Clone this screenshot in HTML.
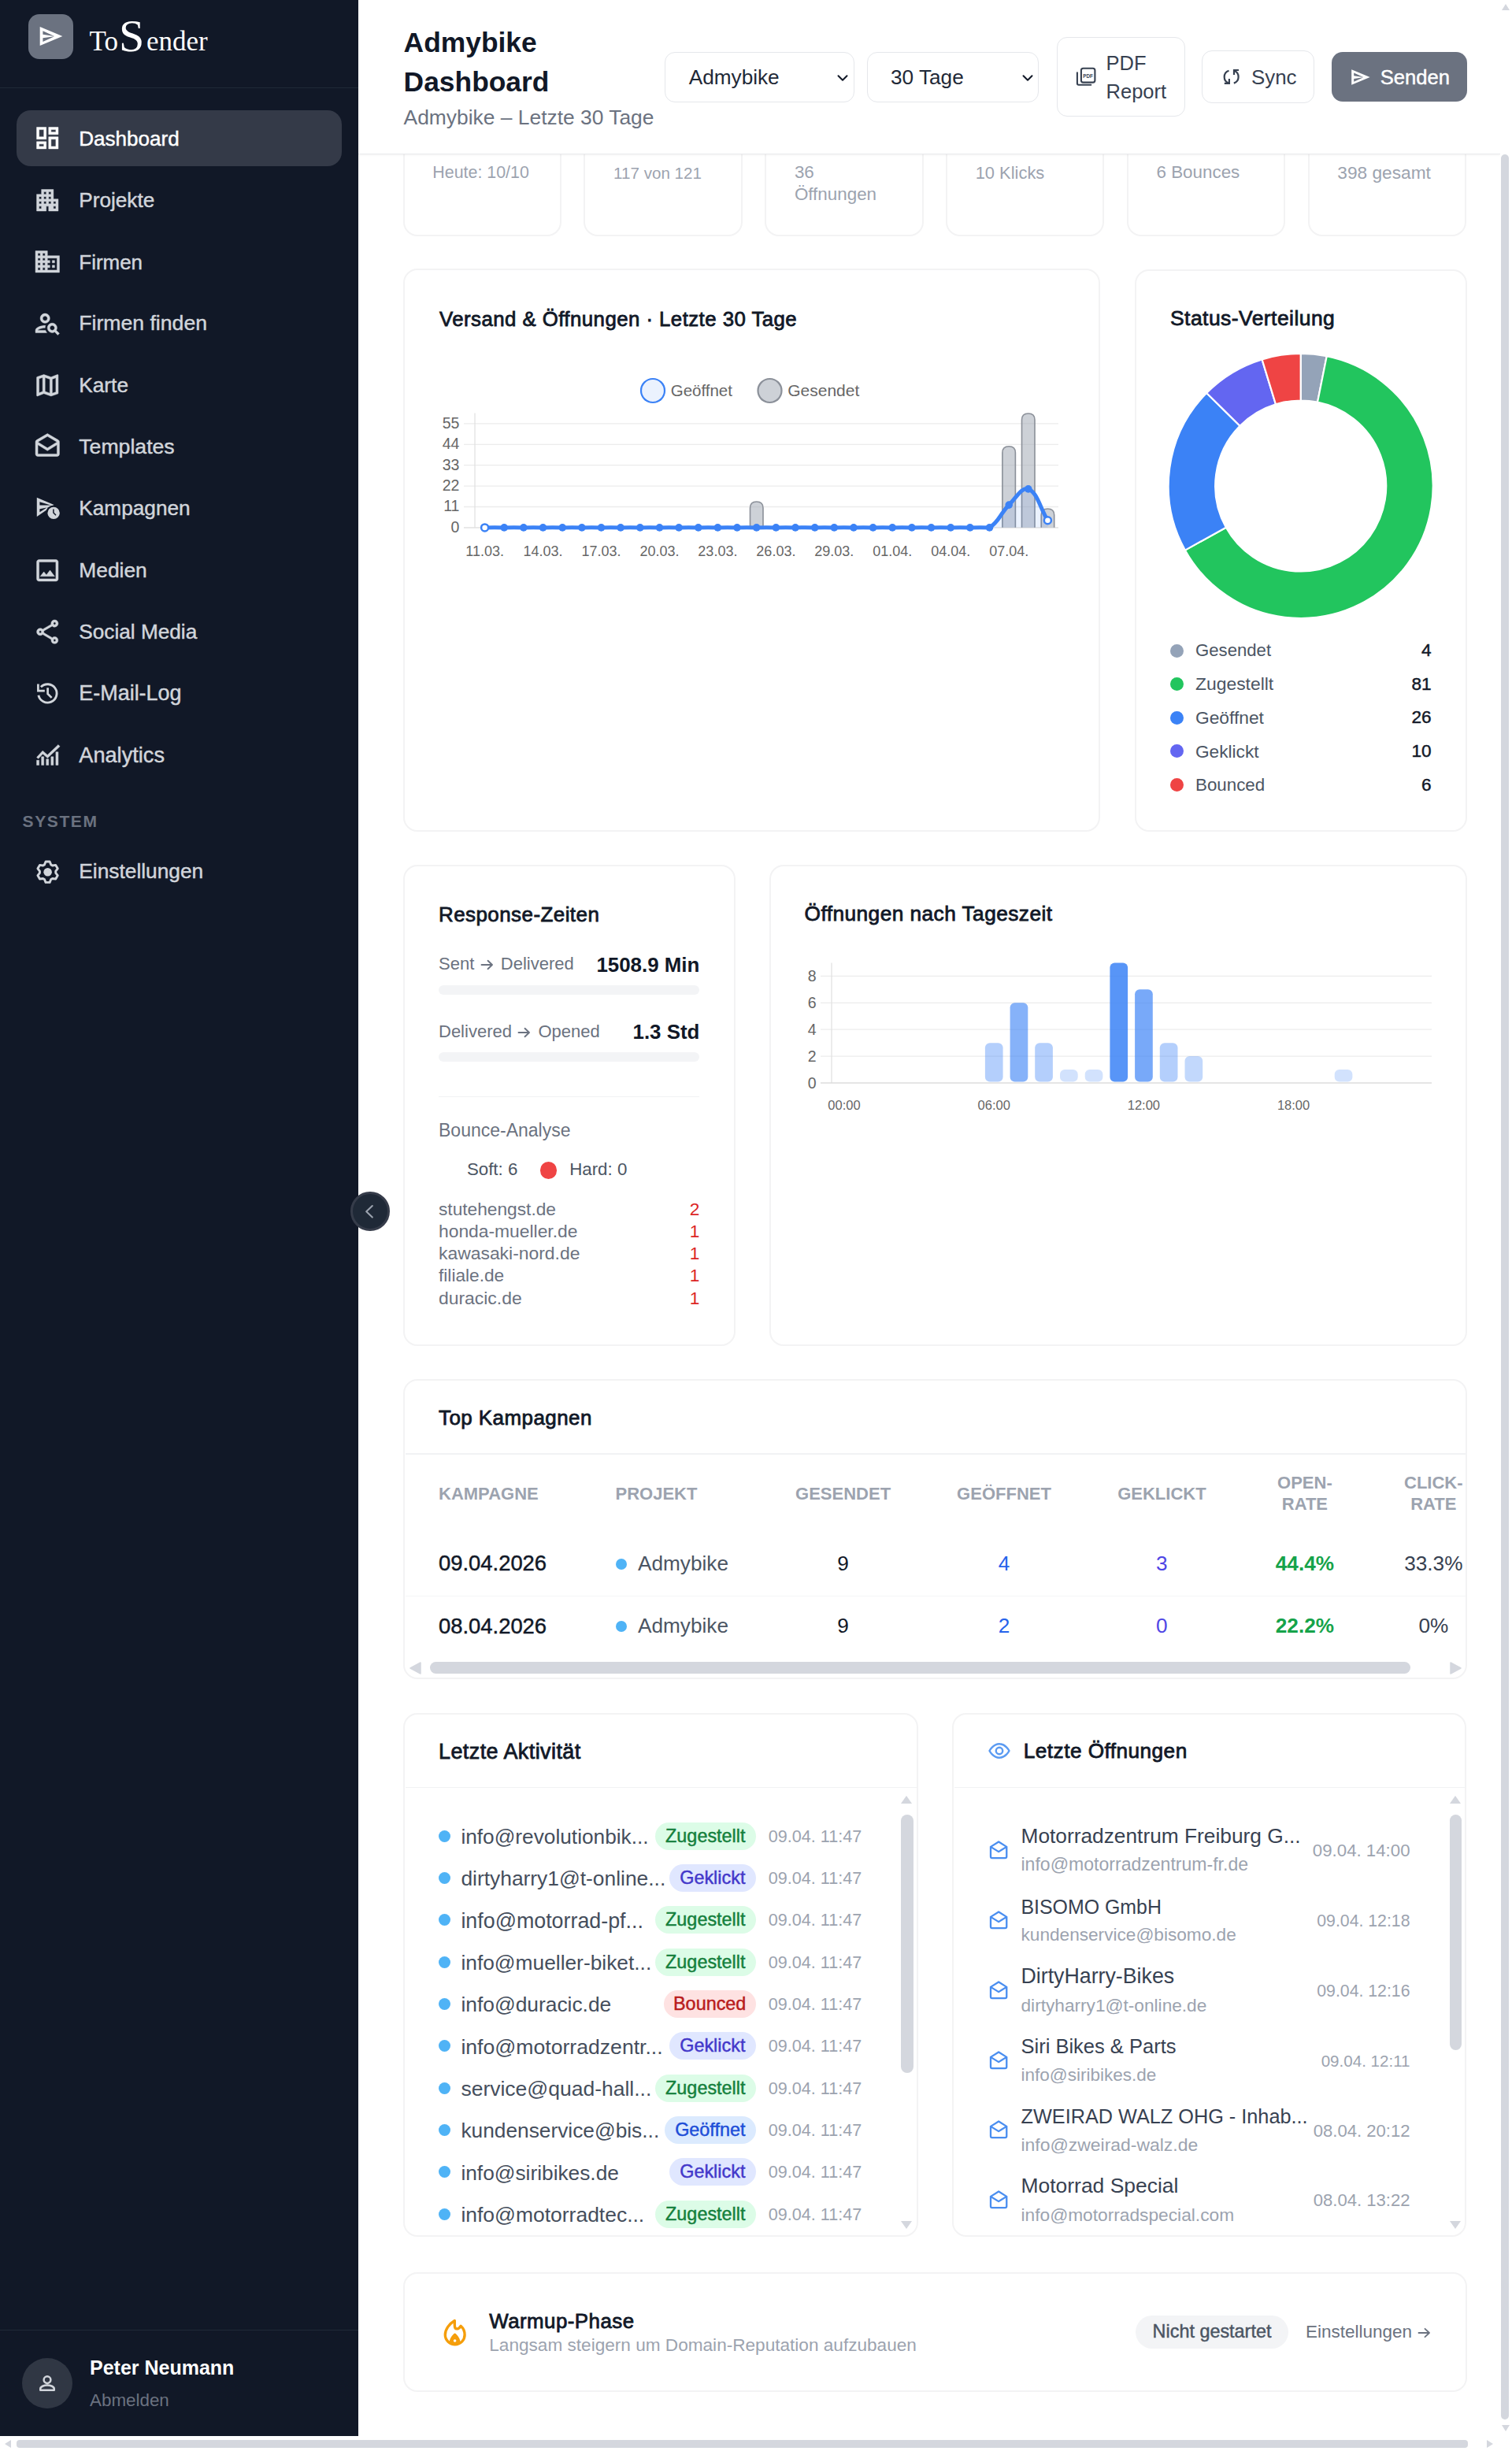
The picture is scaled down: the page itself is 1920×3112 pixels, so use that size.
<!DOCTYPE html><html><head><meta charset="utf-8"><title>Admybike Dashboard</title>
<style>
html,body{margin:0;padding:0;}
body{width:1920px;height:3112px;overflow:hidden;position:relative;background:#fff;font-family:"Liberation Sans",sans-serif;}
.t{position:absolute;white-space:nowrap;}
.b{position:absolute;}
svg.b{overflow:visible;}
</style></head><body>

<div class="b" style="left:511.5px;top:59.0px;width:201.6px;height:240.5px;background:#fff;border:2.2px solid #f3f3f4;border-radius:18px;box-sizing:border-box;"></div>
<div class="t " style="left:549.3px;top:206.1px;font-size:21.4px;line-height:27px;color:#9ca3af;font-weight:400;">Heute: 10/10</div>
<div class="b" style="left:741.3px;top:59.0px;width:201.6px;height:240.5px;background:#fff;border:2.2px solid #f3f3f4;border-radius:18px;box-sizing:border-box;"></div>
<div class="t " style="left:779.1px;top:206.9px;font-size:20.6px;line-height:26px;color:#9ca3af;font-weight:400;">117 von 121</div>
<div class="b" style="left:971.1px;top:59.0px;width:201.6px;height:240.5px;background:#fff;border:2.2px solid #f3f3f4;border-radius:18px;box-sizing:border-box;"></div>
<div class="t " style="left:1008.9px;top:205.2px;font-size:22.4px;line-height:28px;color:#9ca3af;font-weight:400;">36</div>
<div class="t " style="left:1008.9px;top:233.0px;font-size:22.4px;line-height:28px;color:#9ca3af;font-weight:400;">Öffnungen</div>
<div class="b" style="left:1200.9px;top:59.0px;width:201.6px;height:240.5px;background:#fff;border:2.2px solid #f3f3f4;border-radius:18px;box-sizing:border-box;"></div>
<div class="t " style="left:1238.7px;top:205.9px;font-size:21.9px;line-height:27px;color:#9ca3af;font-weight:400;">10 Klicks</div>
<div class="b" style="left:1430.7px;top:59.0px;width:201.6px;height:240.5px;background:#fff;border:2.2px solid #f3f3f4;border-radius:18px;box-sizing:border-box;"></div>
<div class="t " style="left:1468.5px;top:205.2px;font-size:22.4px;line-height:28px;color:#9ca3af;font-weight:400;">6 Bounces</div>
<div class="b" style="left:1660.5px;top:59.0px;width:201.6px;height:240.5px;background:#fff;border:2.2px solid #f3f3f4;border-radius:18px;box-sizing:border-box;"></div>
<div class="t " style="left:1698.3px;top:205.1px;font-size:22.7px;line-height:28px;color:#9ca3af;font-weight:400;">398 gesamt</div>
<div class="b" style="left:512.2px;top:341.0px;width:884.6px;height:715.0px;background:#fff;border:2.2px solid #f3f3f4;border-radius:18px;box-sizing:border-box;"></div>
<div class="t " style="left:558.0px;top:389.1px;font-size:25.807591767607967px;line-height:32px;color:#111827;font-weight:400;-webkit-text-stroke:0.8px currentColor;letter-spacing:0.45px;">Versand &amp; Öffnungen · Letzte 30 Tage</div>
<svg class="b" style="left:0;top:0" width="1920" height="1100" viewBox="0 0 1920 1100"><line x1="589" y1="643.5" x2="1344" y2="643.5" stroke="#ececec" stroke-width="1.3"/><line x1="589" y1="617.1" x2="1344" y2="617.1" stroke="#ececec" stroke-width="1.3"/><line x1="589" y1="590.7" x2="1344" y2="590.7" stroke="#ececec" stroke-width="1.3"/><line x1="589" y1="564.3" x2="1344" y2="564.3" stroke="#ececec" stroke-width="1.3"/><line x1="589" y1="537.9" x2="1344" y2="537.9" stroke="#ececec" stroke-width="1.3"/><line x1="603" y1="524.5" x2="603" y2="670" stroke="#e2e2e2" stroke-width="1.3"/><line x1="589" y1="670" x2="1344" y2="670" stroke="#e2e2e2" stroke-width="1.3"/><path d="M952.5 669.7 V645.0 Q952.5 637.0 960.7 637.0 Q969.0 637.0 969.0 645.0 V669.7" fill="rgba(156,163,175,0.5)" stroke="#8b9099" stroke-width="1.6"/><path d="M1272.9 669.7 V574.8 Q1272.9 566.8 1281.2 566.8 Q1289.4 566.8 1289.4 574.8 V669.7" fill="rgba(156,163,175,0.5)" stroke="#8b9099" stroke-width="1.6"/><path d="M1297.5 669.7 V533.0 Q1297.5 525.0 1305.8 525.0 Q1314.0 525.0 1314.0 533.0 V669.7" fill="rgba(156,163,175,0.5)" stroke="#8b9099" stroke-width="1.6"/><path d="M1322.2 669.7 V654.0 Q1322.2 646.0 1330.4 646.0 Q1338.7 646.0 1338.7 654.0 V669.7" fill="rgba(156,163,175,0.5)" stroke="#8b9099" stroke-width="1.6"/><path d="M615.6 669.9 C625.5 669.7 630.4 669.7 640.2 669.9 C650.1 669.7 655.0 669.7 664.9 669.9 C674.8 669.7 679.7 669.7 689.5 669.9 C699.4 669.7 704.3 669.7 714.2 669.9 C724.1 669.7 729.0 669.7 738.9 669.9 C748.7 669.7 753.6 669.7 763.5 669.9 C773.4 669.7 778.3 669.7 788.1 669.9 C798.0 669.7 802.9 669.7 812.8 669.9 C822.7 669.7 827.6 669.7 837.5 669.9 C847.3 669.7 852.2 669.7 862.1 669.9 C872.0 669.7 876.9 669.7 886.8 669.9 C896.6 669.7 901.5 669.7 911.4 669.9 C921.3 669.7 926.2 669.7 936.0 669.9 C945.9 669.7 950.8 669.7 960.7 669.9 C970.6 669.7 975.5 669.7 985.4 669.9 C995.2 669.7 1000.1 669.7 1010.0 669.9 C1019.9 669.7 1024.8 669.7 1034.7 669.9 C1044.5 669.7 1049.4 669.7 1059.3 669.9 C1069.2 669.7 1074.1 669.7 1084.0 669.9 C1093.8 669.7 1098.7 669.7 1108.6 669.9 C1118.5 669.7 1123.4 669.7 1133.2 669.9 C1143.1 669.7 1148.0 669.7 1157.9 669.9 C1167.8 669.7 1172.7 669.7 1182.5 669.9 C1192.4 669.7 1197.3 669.7 1207.2 669.9 C1217.1 669.7 1222.0 669.7 1231.8 669.9 C1241.7 669.7 1248.7 669.7 1256.5 669.9 C1268.4 662.9 1270.4 651.7 1281.2 641.1 C1290.2 632.2 1297.8 617.8 1305.8 620.9 C1317.5 625.6 1320.6 644.8 1330.4 660.8 L1330.4 669.7 L615.6 669.7 Z" fill="rgba(59,130,246,0.1)"/><path d="M615.6 669.9 C625.5 669.7 630.4 669.7 640.2 669.9 C650.1 669.7 655.0 669.7 664.9 669.9 C674.8 669.7 679.7 669.7 689.5 669.9 C699.4 669.7 704.3 669.7 714.2 669.9 C724.1 669.7 729.0 669.7 738.9 669.9 C748.7 669.7 753.6 669.7 763.5 669.9 C773.4 669.7 778.3 669.7 788.1 669.9 C798.0 669.7 802.9 669.7 812.8 669.9 C822.7 669.7 827.6 669.7 837.5 669.9 C847.3 669.7 852.2 669.7 862.1 669.9 C872.0 669.7 876.9 669.7 886.8 669.9 C896.6 669.7 901.5 669.7 911.4 669.9 C921.3 669.7 926.2 669.7 936.0 669.9 C945.9 669.7 950.8 669.7 960.7 669.9 C970.6 669.7 975.5 669.7 985.4 669.9 C995.2 669.7 1000.1 669.7 1010.0 669.9 C1019.9 669.7 1024.8 669.7 1034.7 669.9 C1044.5 669.7 1049.4 669.7 1059.3 669.9 C1069.2 669.7 1074.1 669.7 1084.0 669.9 C1093.8 669.7 1098.7 669.7 1108.6 669.9 C1118.5 669.7 1123.4 669.7 1133.2 669.9 C1143.1 669.7 1148.0 669.7 1157.9 669.9 C1167.8 669.7 1172.7 669.7 1182.5 669.9 C1192.4 669.7 1197.3 669.7 1207.2 669.9 C1217.1 669.7 1222.0 669.7 1231.8 669.9 C1241.7 669.7 1248.7 669.7 1256.5 669.9 C1268.4 662.9 1270.4 651.7 1281.2 641.1 C1290.2 632.2 1297.8 617.8 1305.8 620.9 C1317.5 625.6 1320.6 644.8 1330.4 660.8" fill="none" stroke="#3b82f6" stroke-width="5" stroke-linejoin="round"/><circle cx="615.6" cy="669.9" r="4.5" fill="#fff" stroke="#3b82f6" stroke-width="2.5"/><circle cx="640.2" cy="669.9" r="4.8" fill="#3b82f6"/><circle cx="664.9" cy="669.9" r="4.8" fill="#3b82f6"/><circle cx="689.5" cy="669.9" r="4.8" fill="#3b82f6"/><circle cx="714.2" cy="669.9" r="4.8" fill="#3b82f6"/><circle cx="738.9" cy="669.9" r="4.8" fill="#3b82f6"/><circle cx="763.5" cy="669.9" r="4.8" fill="#3b82f6"/><circle cx="788.1" cy="669.9" r="4.8" fill="#3b82f6"/><circle cx="812.8" cy="669.9" r="4.8" fill="#3b82f6"/><circle cx="837.5" cy="669.9" r="4.8" fill="#3b82f6"/><circle cx="862.1" cy="669.9" r="4.8" fill="#3b82f6"/><circle cx="886.8" cy="669.9" r="4.8" fill="#3b82f6"/><circle cx="911.4" cy="669.9" r="4.8" fill="#3b82f6"/><circle cx="936.0" cy="669.9" r="4.8" fill="#3b82f6"/><circle cx="960.7" cy="669.9" r="4.8" fill="#3b82f6"/><circle cx="985.4" cy="669.9" r="4.8" fill="#3b82f6"/><circle cx="1010.0" cy="669.9" r="4.8" fill="#3b82f6"/><circle cx="1034.7" cy="669.9" r="4.8" fill="#3b82f6"/><circle cx="1059.3" cy="669.9" r="4.8" fill="#3b82f6"/><circle cx="1084.0" cy="669.9" r="4.8" fill="#3b82f6"/><circle cx="1108.6" cy="669.9" r="4.8" fill="#3b82f6"/><circle cx="1133.2" cy="669.9" r="4.8" fill="#3b82f6"/><circle cx="1157.9" cy="669.9" r="4.8" fill="#3b82f6"/><circle cx="1182.5" cy="669.9" r="4.8" fill="#3b82f6"/><circle cx="1207.2" cy="669.9" r="4.8" fill="#3b82f6"/><circle cx="1231.8" cy="669.9" r="4.8" fill="#3b82f6"/><circle cx="1256.5" cy="669.9" r="4.8" fill="#3b82f6"/><circle cx="1281.2" cy="641.1" r="4.8" fill="#3b82f6"/><circle cx="1305.8" cy="620.9" r="4.8" fill="#3b82f6"/><circle cx="1330.4" cy="660.8" r="4.5" fill="#fff" stroke="#3b82f6" stroke-width="2.5"/><circle cx="829" cy="496" r="15" fill="rgba(59,130,246,0.1)" stroke="#3b82f6" stroke-width="2.2"/><circle cx="977.5" cy="496" r="15" fill="rgba(156,163,175,0.5)" stroke="#8b9099" stroke-width="2.2"/></svg>
<div class="t " style="left:851.7px;top:483.4px;font-size:20.5px;line-height:26px;color:#666666;font-weight:400;">Geöffnet</div>
<div class="t " style="left:1000.2px;top:483.2px;font-size:21px;line-height:26px;color:#666666;font-weight:400;">Gesendet</div>
<div class="t " style="left:523.4px;width:60px;text-align:right;top:656.7px;font-size:19.5px;line-height:24px;color:#666666;font-weight:400;">0</div>
<div class="t " style="left:523.4px;width:60px;text-align:right;top:630.3px;font-size:19.5px;line-height:24px;color:#666666;font-weight:400;">11</div>
<div class="t " style="left:523.4px;width:60px;text-align:right;top:603.9px;font-size:19.5px;line-height:24px;color:#666666;font-weight:400;">22</div>
<div class="t " style="left:523.4px;width:60px;text-align:right;top:577.5px;font-size:19.5px;line-height:24px;color:#666666;font-weight:400;">33</div>
<div class="t " style="left:523.4px;width:60px;text-align:right;top:551.1px;font-size:19.5px;line-height:24px;color:#666666;font-weight:400;">44</div>
<div class="t " style="left:523.4px;width:60px;text-align:right;top:524.7px;font-size:19.5px;line-height:24px;color:#666666;font-weight:400;">55</div>
<div class="t " style="left:565.6px;width:100px;text-align:center;top:688.6px;font-size:18px;line-height:22px;color:#666666;font-weight:400;">11.03.</div>
<div class="t " style="left:639.5px;width:100px;text-align:center;top:688.6px;font-size:18px;line-height:22px;color:#666666;font-weight:400;">14.03.</div>
<div class="t " style="left:713.5px;width:100px;text-align:center;top:688.6px;font-size:18px;line-height:22px;color:#666666;font-weight:400;">17.03.</div>
<div class="t " style="left:787.5px;width:100px;text-align:center;top:688.6px;font-size:18px;line-height:22px;color:#666666;font-weight:400;">20.03.</div>
<div class="t " style="left:861.4px;width:100px;text-align:center;top:688.6px;font-size:18px;line-height:22px;color:#666666;font-weight:400;">23.03.</div>
<div class="t " style="left:935.4px;width:100px;text-align:center;top:688.6px;font-size:18px;line-height:22px;color:#666666;font-weight:400;">26.03.</div>
<div class="t " style="left:1009.3px;width:100px;text-align:center;top:688.6px;font-size:18px;line-height:22px;color:#666666;font-weight:400;">29.03.</div>
<div class="t " style="left:1083.2px;width:100px;text-align:center;top:688.6px;font-size:18px;line-height:22px;color:#666666;font-weight:400;">01.04.</div>
<div class="t " style="left:1157.2px;width:100px;text-align:center;top:688.6px;font-size:18px;line-height:22px;color:#666666;font-weight:400;">04.04.</div>
<div class="t " style="left:1231.2px;width:100px;text-align:center;top:688.6px;font-size:18px;line-height:22px;color:#666666;font-weight:400;">07.04.</div>
<div class="b" style="left:1441.2px;top:342.0px;width:421.6px;height:714.0px;background:#fff;border:2.2px solid #f3f3f4;border-radius:18px;box-sizing:border-box;"></div>
<div class="t " style="left:1486.0px;top:388.0px;font-size:26.4779138712788px;line-height:33px;color:#111827;font-weight:400;-webkit-text-stroke:0.8px currentColor;letter-spacing:0.45px;">Status-Verteilung</div>
<svg class="b" style="left:0;top:0" width="1920" height="1100" viewBox="0 0 1920 1100"><path d="M1651.70 449.00 A168 168 0 0 1 1684.73 452.28 L1673.03 510.62 A108.5 108.5 0 0 0 1651.70 508.50 Z" fill="#94a3b8" stroke="#fff" stroke-width="2.2" stroke-linejoin="round"/><path d="M1684.73 452.28 A168 168 0 1 1 1504.84 698.59 L1556.85 669.69 A108.5 108.5 0 1 0 1673.03 510.62 Z" fill="#22c55e" stroke="#fff" stroke-width="2.2" stroke-linejoin="round"/><path d="M1504.84 698.59 A168 168 0 0 1 1532.17 498.94 L1574.51 540.75 A108.5 108.5 0 0 0 1556.85 669.69 Z" fill="#3b82f6" stroke="#fff" stroke-width="2.2" stroke-linejoin="round"/><path d="M1532.17 498.94 A168 168 0 0 1 1602.56 456.35 L1619.96 513.25 A108.5 108.5 0 0 0 1574.51 540.75 Z" fill="#6366f1" stroke="#fff" stroke-width="2.2" stroke-linejoin="round"/><path d="M1602.56 456.35 A168 168 0 0 1 1651.70 449.00 L1651.70 508.50 A108.5 108.5 0 0 0 1619.96 513.25 Z" fill="#ef4444" stroke="#fff" stroke-width="2.2" stroke-linejoin="round"/></svg>
<div class="b" style="left:1485.5px;top:817.5px;width:17.0px;height:17.0px;background:#94a3b8;border-radius:50%;"></div>
<div class="t " style="left:1518.0px;top:812.3px;font-size:22.160409310369676px;line-height:28px;color:#4b5563;font-weight:400;">Gesendet</div>
<div class="t " style="left:1717.6px;width:100px;text-align:right;top:812.2px;font-size:22.6px;line-height:28px;color:#111827;font-weight:400;-webkit-text-stroke:0.45px currentColor;">4</div>
<div class="b" style="left:1485.5px;top:860.1px;width:17.0px;height:17.0px;background:#22c55e;border-radius:50%;"></div>
<div class="t " style="left:1518.0px;top:854.2px;font-size:22.881032183659496px;line-height:29px;color:#4b5563;font-weight:400;">Zugestellt</div>
<div class="t " style="left:1717.6px;width:100px;text-align:right;top:854.8px;font-size:22.6px;line-height:28px;color:#111827;font-weight:400;-webkit-text-stroke:0.45px currentColor;">81</div>
<div class="b" style="left:1485.5px;top:902.7px;width:17.0px;height:17.0px;background:#3b82f6;border-radius:50%;"></div>
<div class="t " style="left:1518.0px;top:897.3px;font-size:22.786985880908535px;line-height:28px;color:#4b5563;font-weight:400;">Geöffnet</div>
<div class="t " style="left:1717.6px;width:100px;text-align:right;top:897.4px;font-size:22.6px;line-height:28px;color:#111827;font-weight:400;-webkit-text-stroke:0.45px currentColor;">26</div>
<div class="b" style="left:1485.5px;top:945.3px;width:17.0px;height:17.0px;background:#6366f1;border-radius:50%;"></div>
<div class="t " style="left:1518.0px;top:939.9px;font-size:22.66432337434095px;line-height:28px;color:#4b5563;font-weight:400;">Geklickt</div>
<div class="t " style="left:1717.6px;width:100px;text-align:right;top:940.0px;font-size:22.6px;line-height:28px;color:#111827;font-weight:400;-webkit-text-stroke:0.45px currentColor;">10</div>
<div class="b" style="left:1485.5px;top:987.9px;width:17.0px;height:17.0px;background:#ef4444;border-radius:50%;"></div>
<div class="t " style="left:1518.0px;top:982.7px;font-size:22.34148658275944px;line-height:28px;color:#4b5563;font-weight:400;">Bounced</div>
<div class="t " style="left:1717.6px;width:100px;text-align:right;top:982.6px;font-size:22.6px;line-height:28px;color:#111827;font-weight:400;-webkit-text-stroke:0.45px currentColor;">6</div>
<div class="b" style="left:511.7px;top:1098.0px;width:422.1px;height:610.5px;background:#fff;border:2.2px solid #f3f3f4;border-radius:18px;box-sizing:border-box;"></div>
<div class="t " style="left:557.0px;top:1144.8px;font-size:25.941154745783578px;line-height:32px;color:#111827;font-weight:400;-webkit-text-stroke:0.8px currentColor;letter-spacing:0.45px;">Response-Zeiten</div>
<div class="t " style="left:557.0px;top:1210.4px;font-size:22px;line-height:28px;color:#6b7280;font-weight:400;">Sent<svg width="17" height="14" viewBox="0 0 17 14" style="vertical-align:-1px;margin:0 9px 0 7.5px"><path d="M1.5 7H15 M9.5 1.8L15 7 9.5 12.2" fill="none" stroke="#6b7280" stroke-width="1.9" stroke-linecap="round" stroke-linejoin="round"/></svg>Delivered</div>
<div class="t " style="left:588.4px;width:300px;text-align:right;top:1208.5px;font-size:25.9px;line-height:32px;color:#111827;font-weight:700;">1508.9 Min</div>
<div class="b" style="left:557.0px;top:1250.7px;width:331.4px;height:12.5px;background:#f3f4f6;border-radius:7px;"></div>
<div class="t " style="left:557.0px;top:1296.1px;font-size:22px;line-height:28px;color:#6b7280;font-weight:400;">Delivered<svg width="17" height="14" viewBox="0 0 17 14" style="vertical-align:-1px;margin:0 9px 0 7.5px"><path d="M1.5 7H15 M9.5 1.8L15 7 9.5 12.2" fill="none" stroke="#6b7280" stroke-width="1.9" stroke-linecap="round" stroke-linejoin="round"/></svg>Opened</div>
<div class="t " style="left:588.4px;width:300px;text-align:right;top:1294.0px;font-size:25.9px;line-height:32px;color:#111827;font-weight:700;">1.3 Std</div>
<div class="b" style="left:557.0px;top:1335.5px;width:331.4px;height:12.8px;background:#f3f4f6;border-radius:7px;"></div>
<div class="b" style="left:557.0px;top:1391.5px;width:331.4px;height:1.5px;background:#f1f2f4;"></div>
<div class="t " style="left:557.0px;top:1420.8px;font-size:23px;line-height:29px;color:#6b7280;font-weight:400;">Bounce-Analyse</div>
<div class="t " style="left:592.9px;top:1471.3px;font-size:22.3px;line-height:28px;color:#4b5563;font-weight:400;">Soft: 6</div>
<div class="b" style="left:686.0px;top:1475.3px;width:21.4px;height:21.4px;background:#ef4444;border-radius:50%;"></div>
<div class="t " style="left:723.2px;top:1471.3px;font-size:22.3px;line-height:28px;color:#4b5563;font-weight:400;">Hard: 0</div>
<div class="t " style="left:557.0px;top:1520.5px;font-size:22.711250833571498px;line-height:28px;color:#6b7280;font-weight:400;">stutehengst.de</div>
<div class="t " style="left:828.4px;width:60px;text-align:right;top:1520.5px;font-size:22.7px;line-height:28px;color:#dc2626;font-weight:400;">2</div>
<div class="t " style="left:557.0px;top:1548.8px;font-size:22.840042865519543px;line-height:28px;color:#6b7280;font-weight:400;">honda-mueller.de</div>
<div class="t " style="left:828.4px;width:60px;text-align:right;top:1548.8px;font-size:22.7px;line-height:28px;color:#dc2626;font-weight:400;">1</div>
<div class="t " style="left:557.0px;top:1577.1px;font-size:22.902711323763956px;line-height:28px;color:#6b7280;font-weight:400;">kawasaki-nord.de</div>
<div class="t " style="left:828.4px;width:60px;text-align:right;top:1577.1px;font-size:22.7px;line-height:28px;color:#dc2626;font-weight:400;">1</div>
<div class="t " style="left:557.0px;top:1605.4px;font-size:22.703347244698065px;line-height:28px;color:#6b7280;font-weight:400;">filiale.de</div>
<div class="t " style="left:828.4px;width:60px;text-align:right;top:1605.4px;font-size:22.7px;line-height:28px;color:#dc2626;font-weight:400;">1</div>
<div class="t " style="left:557.0px;top:1633.7px;font-size:22.909004707236953px;line-height:28px;color:#6b7280;font-weight:400;">duracic.de</div>
<div class="t " style="left:828.4px;width:60px;text-align:right;top:1633.7px;font-size:22.7px;line-height:28px;color:#dc2626;font-weight:400;">1</div>
<div class="b" style="left:977.2px;top:1098.0px;width:885.6px;height:610.6px;background:#fff;border:2.2px solid #f3f3f4;border-radius:18px;box-sizing:border-box;"></div>
<div class="t " style="left:1021.5px;top:1144.4px;font-size:26.288242594291265px;line-height:33px;color:#111827;font-weight:400;-webkit-text-stroke:0.8px currentColor;letter-spacing:0.45px;">Öffnungen nach Tageszeit</div>
<svg class="b" style="left:0;top:0" width="1920" height="1500" viewBox="0 0 1920 1500"><line x1="1042" y1="1341.1" x2="1818" y2="1341.1" stroke="#ececec" stroke-width="1.3"/><line x1="1042" y1="1307.2" x2="1818" y2="1307.2" stroke="#ececec" stroke-width="1.3"/><line x1="1042" y1="1273.3" x2="1818" y2="1273.3" stroke="#ececec" stroke-width="1.3"/><line x1="1042" y1="1239.4" x2="1818" y2="1239.4" stroke="#ececec" stroke-width="1.3"/><line x1="1056" y1="1222.5" x2="1056" y2="1375" stroke="#e2e2e2" stroke-width="1.3"/><line x1="1042" y1="1375" x2="1818" y2="1375" stroke="#dcdcdc" stroke-width="1.6"/><rect x="1250.9" y="1324.2" width="22.7" height="49.3" rx="6" fill="rgba(59,130,246,0.38)"/><rect x="1282.6" y="1273.3" width="22.7" height="100.2" rx="6" fill="rgba(59,130,246,0.62)"/><rect x="1314.2" y="1324.2" width="22.7" height="49.3" rx="6" fill="rgba(59,130,246,0.38)"/><rect x="1346.0" y="1358.0" width="22.7" height="15.5" rx="6" fill="rgba(59,130,246,0.23)"/><rect x="1377.7" y="1358.0" width="22.7" height="15.5" rx="6" fill="rgba(59,130,246,0.23)"/><rect x="1409.4" y="1222.5" width="22.7" height="151.0" rx="6" fill="rgba(59,130,246,0.85)"/><rect x="1441.1" y="1256.3" width="22.7" height="117.2" rx="6" fill="rgba(59,130,246,0.69)"/><rect x="1472.8" y="1324.2" width="22.7" height="49.3" rx="6" fill="rgba(59,130,246,0.38)"/><rect x="1504.5" y="1341.1" width="22.7" height="32.4" rx="6" fill="rgba(59,130,246,0.31)"/><rect x="1694.7" y="1358.0" width="22.7" height="15.5" rx="6" fill="rgba(59,130,246,0.23)"/></svg>
<div class="t " style="left:996.5px;width:40px;text-align:right;top:1362.5px;font-size:19.5px;line-height:24px;color:#666666;font-weight:400;">0</div>
<div class="t " style="left:996.5px;width:40px;text-align:right;top:1328.6px;font-size:19.5px;line-height:24px;color:#666666;font-weight:400;">2</div>
<div class="t " style="left:996.5px;width:40px;text-align:right;top:1294.7px;font-size:19.5px;line-height:24px;color:#666666;font-weight:400;">4</div>
<div class="t " style="left:996.5px;width:40px;text-align:right;top:1260.8px;font-size:19.5px;line-height:24px;color:#666666;font-weight:400;">6</div>
<div class="t " style="left:996.5px;width:40px;text-align:right;top:1226.9px;font-size:19.5px;line-height:24px;color:#666666;font-weight:400;">8</div>
<div class="t " style="left:1022.0px;width:100px;text-align:center;top:1392.8px;font-size:16.5px;line-height:21px;color:#666666;font-weight:400;">00:00</div>
<div class="t " style="left:1212.2px;width:100px;text-align:center;top:1392.8px;font-size:16.5px;line-height:21px;color:#666666;font-weight:400;">06:00</div>
<div class="t " style="left:1402.4px;width:100px;text-align:center;top:1392.8px;font-size:16.5px;line-height:21px;color:#666666;font-weight:400;">12:00</div>
<div class="t " style="left:1592.6px;width:100px;text-align:center;top:1392.8px;font-size:16.5px;line-height:21px;color:#666666;font-weight:400;">18:00</div>
<div class="b" style="left:512.2px;top:1750.6px;width:1350.6px;height:381.4px;background:#fff;border:2.2px solid #f3f3f4;border-radius:18px;box-sizing:border-box;"></div>
<div class="t " style="left:557.0px;top:1783.5px;font-size:25.942977281016027px;line-height:32px;color:#111827;font-weight:400;-webkit-text-stroke:0.8px currentColor;letter-spacing:0.45px;">Top Kampagnen</div>
<div class="b" style="left:514.5px;top:1845.0px;width:1346.0px;height:1.5px;background:#f1f2f4;"></div>
<div class="t " style="left:557.0px;top:1882.8px;font-size:22px;line-height:28px;color:#9ca3af;font-weight:700;letter-spacing:0px;">KAMPAGNE</div>
<div class="t " style="left:781.5px;top:1882.8px;font-size:22px;line-height:28px;color:#9ca3af;font-weight:700;letter-spacing:0px;">PROJEKT</div>
<div class="t " style="left:970.6px;width:200px;text-align:center;top:1882.8px;font-size:22px;line-height:28px;color:#9ca3af;font-weight:700;letter-spacing:0px;">GESENDET</div>
<div class="t " style="left:1175.0px;width:200px;text-align:center;top:1882.8px;font-size:22px;line-height:28px;color:#9ca3af;font-weight:700;letter-spacing:0px;">GEÖFFNET</div>
<div class="t " style="left:1375.4px;width:200px;text-align:center;top:1882.8px;font-size:22px;line-height:28px;color:#9ca3af;font-weight:700;letter-spacing:0px;">GEKLICKT</div>
<div class="t " style="left:1556.9px;width:200px;text-align:center;top:1868.9px;font-size:22px;line-height:28px;color:#9ca3af;font-weight:700;letter-spacing:0px;">OPEN-</div>
<div class="t " style="left:1556.9px;width:200px;text-align:center;top:1896.4px;font-size:22px;line-height:28px;color:#9ca3af;font-weight:700;letter-spacing:0px;">RATE</div>
<div class="b" style="left:1740px;top:1860px;width:122px;height:260px;overflow:hidden;">
<div class="t " style="left:-19.7px;width:200px;text-align:center;top:8.9px;font-size:22px;line-height:28px;color:#9ca3af;font-weight:700;letter-spacing:0px;">CLICK-</div>
<div class="t " style="left:-19.7px;width:200px;text-align:center;top:36.4px;font-size:22px;line-height:28px;color:#9ca3af;font-weight:700;letter-spacing:0px;">RATE</div>
<div class="t " style="left:-19.7px;width:200px;text-align:center;top:109.0px;font-size:26.2px;line-height:33px;color:#374151;font-weight:400;">33.3%</div>
<div class="t " style="left:-19.7px;width:200px;text-align:center;top:188.4px;font-size:26.2px;line-height:33px;color:#374151;font-weight:400;">0%</div>
</div>
<div class="t " style="left:557.0px;top:1968.1px;font-size:27.4px;line-height:34px;color:#111827;font-weight:400;-webkit-text-stroke:0.45px currentColor;">09.04.2026</div>
<div class="b" style="left:781.5px;top:1978.6px;width:14.0px;height:14.0px;background:#4fb3f6;border-radius:50%;"></div>
<div class="t " style="left:810.0px;top:1969.0px;font-size:26.2px;line-height:33px;color:#4b5563;font-weight:400;">Admybike</div>
<div class="t " style="left:1020.6px;width:100px;text-align:center;top:1969.0px;font-size:26.2px;line-height:33px;color:#111827;font-weight:400;">9</div>
<div class="t " style="left:1225.0px;width:100px;text-align:center;top:1969.0px;font-size:26.2px;line-height:33px;color:#2563eb;font-weight:400;">4</div>
<div class="t " style="left:1425.4px;width:100px;text-align:center;top:1969.0px;font-size:26.2px;line-height:33px;color:#4f46e5;font-weight:400;">3</div>
<div class="t " style="left:1556.9px;width:200px;text-align:center;top:1969.0px;font-size:26.2px;line-height:33px;color:#16a34a;font-weight:700;">44.4%</div>
<div class="t " style="left:557.0px;top:2047.5px;font-size:27.4px;line-height:34px;color:#111827;font-weight:400;-webkit-text-stroke:0.45px currentColor;">08.04.2026</div>
<div class="b" style="left:781.5px;top:2058.0px;width:14.0px;height:14.0px;background:#4fb3f6;border-radius:50%;"></div>
<div class="t " style="left:810.0px;top:2048.4px;font-size:26.2px;line-height:33px;color:#4b5563;font-weight:400;">Admybike</div>
<div class="t " style="left:1020.6px;width:100px;text-align:center;top:2048.4px;font-size:26.2px;line-height:33px;color:#111827;font-weight:400;">9</div>
<div class="t " style="left:1225.0px;width:100px;text-align:center;top:2048.4px;font-size:26.2px;line-height:33px;color:#2563eb;font-weight:400;">2</div>
<div class="t " style="left:1425.4px;width:100px;text-align:center;top:2048.4px;font-size:26.2px;line-height:33px;color:#4f46e5;font-weight:400;">0</div>
<div class="t " style="left:1556.9px;width:200px;text-align:center;top:2048.4px;font-size:26.2px;line-height:33px;color:#16a34a;font-weight:700;">22.2%</div>
<div class="b" style="left:514.5px;top:2025.5px;width:1346.0px;height:1.5px;background:#f5f6f7;"></div>
<div class="b" style="left:546.0px;top:2110.0px;width:1245.0px;height:15.0px;background:#d4d7de;border-radius:8px;"></div>
<svg class="b" style="left:518px;top:2109px" width="20" height="18" viewBox="0 0 20 18"><path d="M3 9 L16 2 V16 Z" fill="#d4d7de" stroke="#d4d7de" stroke-width="1.5" stroke-linejoin="round"/></svg>
<svg class="b" style="left:1838px;top:2109px" width="20" height="18" viewBox="0 0 20 18"><path d="M17 9 L4 2 V16 Z" fill="#d4d7de" stroke="#d4d7de" stroke-width="1.5" stroke-linejoin="round"/></svg>
<div class="b" style="left:512.2px;top:2174.7px;width:653.6px;height:665.3px;background:#fff;border:2.2px solid #f3f3f4;border-radius:18px;box-sizing:border-box;"></div>
<div class="t " style="left:557.0px;top:2206.6px;font-size:26.923859836184754px;line-height:34px;color:#111827;font-weight:400;-webkit-text-stroke:0.8px currentColor;letter-spacing:0.45px;">Letzte Aktivität</div>
<div class="b" style="left:514.5px;top:2268.5px;width:649.0px;height:1.5px;background:#f1f2f4;"></div>
<div class="b" style="left:556.5px;top:2323.5px;width:15.0px;height:15.0px;background:#4fb3f6;border-radius:50%;"></div>
<div class="t " style="left:585.4px;top:2315.9px;font-size:26.269067869563724px;line-height:33px;color:#454e5c;font-weight:400;">info@revolutionbik...</div>
<div class="b" style="left:832.0px;top:2313.5px;width:127.6px;height:35.0px;background:#dcfce7;border-radius:18px;"></div>
<div class="t " style="left:795.8px;width:200px;text-align:center;top:2316.6px;font-size:23.4px;line-height:29px;color:#15803d;font-weight:400;-webkit-text-stroke:0.45px currentColor;">Zugestellt</div>
<div class="t " style="left:975.8px;top:2317.5px;font-size:21.6px;line-height:27px;color:#9ca3af;font-weight:400;">09.04. 11:47</div>
<div class="b" style="left:556.5px;top:2376.8px;width:15.0px;height:15.0px;background:#4fb3f6;border-radius:50%;"></div>
<div class="t " style="left:585.4px;top:2369.2px;font-size:26.39007834554509px;line-height:33px;color:#454e5c;font-weight:400;">dirtyharry1@t-online...</div>
<div class="b" style="left:850.0px;top:2366.8px;width:109.6px;height:35.0px;background:#e0e7ff;border-radius:18px;"></div>
<div class="t " style="left:804.8px;width:200px;text-align:center;top:2369.9px;font-size:23.4px;line-height:29px;color:#4338ca;font-weight:400;-webkit-text-stroke:0.45px currentColor;">Geklickt</div>
<div class="t " style="left:975.8px;top:2370.9px;font-size:21.6px;line-height:27px;color:#9ca3af;font-weight:400;">09.04. 11:47</div>
<div class="b" style="left:556.5px;top:2430.2px;width:15.0px;height:15.0px;background:#4fb3f6;border-radius:50%;"></div>
<div class="t " style="left:585.4px;top:2421.9px;font-size:26.83807420014847px;line-height:34px;color:#454e5c;font-weight:400;">info@motorrad-pf...</div>
<div class="b" style="left:832.0px;top:2420.2px;width:127.6px;height:35.0px;background:#dcfce7;border-radius:18px;"></div>
<div class="t " style="left:795.8px;width:200px;text-align:center;top:2423.3px;font-size:23.4px;line-height:29px;color:#15803d;font-weight:400;-webkit-text-stroke:0.45px currentColor;">Zugestellt</div>
<div class="t " style="left:975.8px;top:2424.2px;font-size:21.6px;line-height:27px;color:#9ca3af;font-weight:400;">09.04. 11:47</div>
<div class="b" style="left:556.5px;top:2483.6px;width:15.0px;height:15.0px;background:#4fb3f6;border-radius:50%;"></div>
<div class="t " style="left:585.4px;top:2475.9px;font-size:26.346857191460405px;line-height:33px;color:#454e5c;font-weight:400;">info@mueller-biket...</div>
<div class="b" style="left:832.0px;top:2473.6px;width:127.6px;height:35.0px;background:#dcfce7;border-radius:18px;"></div>
<div class="t " style="left:795.8px;width:200px;text-align:center;top:2476.6px;font-size:23.4px;line-height:29px;color:#15803d;font-weight:400;-webkit-text-stroke:0.45px currentColor;">Zugestellt</div>
<div class="t " style="left:975.8px;top:2477.6px;font-size:21.6px;line-height:27px;color:#9ca3af;font-weight:400;">09.04. 11:47</div>
<div class="b" style="left:556.5px;top:2536.9px;width:15.0px;height:15.0px;background:#4fb3f6;border-radius:50%;"></div>
<div class="t " style="left:585.4px;top:2529.3px;font-size:26.37666148800276px;line-height:33px;color:#454e5c;font-weight:400;">info@duracic.de</div>
<div class="b" style="left:842.7px;top:2526.9px;width:116.9px;height:35.0px;background:#fee2e2;border-radius:18px;"></div>
<div class="t " style="left:801.2px;width:200px;text-align:center;top:2530.0px;font-size:23.4px;line-height:29px;color:#b91c1c;font-weight:400;-webkit-text-stroke:0.45px currentColor;">Bounced</div>
<div class="t " style="left:975.8px;top:2530.9px;font-size:21.6px;line-height:27px;color:#9ca3af;font-weight:400;">09.04. 11:47</div>
<div class="b" style="left:556.5px;top:2590.2px;width:15.0px;height:15.0px;background:#4fb3f6;border-radius:50%;"></div>
<div class="t " style="left:585.4px;top:2582.5px;font-size:26.613450150077067px;line-height:33px;color:#454e5c;font-weight:400;">info@motorradzentr...</div>
<div class="b" style="left:850.0px;top:2580.2px;width:109.6px;height:35.0px;background:#e0e7ff;border-radius:18px;"></div>
<div class="t " style="left:804.8px;width:200px;text-align:center;top:2583.3px;font-size:23.4px;line-height:29px;color:#4338ca;font-weight:400;-webkit-text-stroke:0.45px currentColor;">Geklickt</div>
<div class="t " style="left:975.8px;top:2584.3px;font-size:21.6px;line-height:27px;color:#9ca3af;font-weight:400;">09.04. 11:47</div>
<div class="b" style="left:556.5px;top:2643.6px;width:15.0px;height:15.0px;background:#4fb3f6;border-radius:50%;"></div>
<div class="t " style="left:585.4px;top:2635.9px;font-size:26.504663301103793px;line-height:33px;color:#454e5c;font-weight:400;">service@quad-hall...</div>
<div class="b" style="left:832.0px;top:2633.6px;width:127.6px;height:35.0px;background:#dcfce7;border-radius:18px;"></div>
<div class="t " style="left:795.8px;width:200px;text-align:center;top:2636.7px;font-size:23.4px;line-height:29px;color:#15803d;font-weight:400;-webkit-text-stroke:0.45px currentColor;">Zugestellt</div>
<div class="t " style="left:975.8px;top:2637.6px;font-size:21.6px;line-height:27px;color:#9ca3af;font-weight:400;">09.04. 11:47</div>
<div class="b" style="left:556.5px;top:2696.9px;width:15.0px;height:15.0px;background:#4fb3f6;border-radius:50%;"></div>
<div class="t " style="left:585.4px;top:2689.3px;font-size:26.307235403544272px;line-height:33px;color:#454e5c;font-weight:400;">kundenservice@bis...</div>
<div class="b" style="left:844.0px;top:2686.9px;width:115.6px;height:35.0px;background:#dbeafe;border-radius:18px;"></div>
<div class="t " style="left:801.8px;width:200px;text-align:center;top:2690.0px;font-size:23.4px;line-height:29px;color:#1d4ed8;font-weight:400;-webkit-text-stroke:0.45px currentColor;">Geöffnet</div>
<div class="t " style="left:975.8px;top:2691.0px;font-size:21.6px;line-height:27px;color:#9ca3af;font-weight:400;">09.04. 11:47</div>
<div class="b" style="left:556.5px;top:2750.3px;width:15.0px;height:15.0px;background:#4fb3f6;border-radius:50%;"></div>
<div class="t " style="left:585.4px;top:2742.7px;font-size:26.292572037109096px;line-height:33px;color:#454e5c;font-weight:400;">info@siribikes.de</div>
<div class="b" style="left:850.0px;top:2740.3px;width:109.6px;height:35.0px;background:#e0e7ff;border-radius:18px;"></div>
<div class="t " style="left:804.8px;width:200px;text-align:center;top:2743.4px;font-size:23.4px;line-height:29px;color:#4338ca;font-weight:400;-webkit-text-stroke:0.45px currentColor;">Geklickt</div>
<div class="t " style="left:975.8px;top:2744.3px;font-size:21.6px;line-height:27px;color:#9ca3af;font-weight:400;">09.04. 11:47</div>
<div class="b" style="left:556.5px;top:2803.7px;width:15.0px;height:15.0px;background:#4fb3f6;border-radius:50%;"></div>
<div class="t " style="left:585.4px;top:2796.0px;font-size:26.488089951507188px;line-height:33px;color:#454e5c;font-weight:400;">info@motorradtec...</div>
<div class="b" style="left:832.0px;top:2793.7px;width:127.6px;height:35.0px;background:#dcfce7;border-radius:18px;"></div>
<div class="t " style="left:795.8px;width:200px;text-align:center;top:2796.7px;font-size:23.4px;line-height:29px;color:#15803d;font-weight:400;-webkit-text-stroke:0.45px currentColor;">Zugestellt</div>
<div class="t " style="left:975.8px;top:2797.7px;font-size:21.6px;line-height:27px;color:#9ca3af;font-weight:400;">09.04. 11:47</div>
<svg class="b" style="left:1141px;top:2277px" width="20" height="16" viewBox="0 0 20 16"><path d="M10 3 L17 13 H3 Z" fill="#d4d7de"/></svg>
<div class="b" style="left:1144.0px;top:2304.0px;width:15.5px;height:328.0px;background:#d4d7de;border-radius:8px;"></div>
<svg class="b" style="left:1141px;top:2817px" width="20" height="16" viewBox="0 0 20 16"><path d="M10 13 L17 3 H3 Z" fill="#d4d7de"/></svg>
<div class="b" style="left:1209.2px;top:2174.7px;width:652.6px;height:665.3px;background:#fff;border:2.2px solid #f3f3f4;border-radius:18px;box-sizing:border-box;"></div>
<svg class="b" style="left:1254.3px;top:2207.6px;" width="30.0" height="30.0" viewBox="0 0 24 24"><path d="M2 12s3.6-7 10-7 10 7 10 7-3.6 7-10 7S2 12 2 12z M12 8.6a3.4 3.4 0 1 1 0 6.8 3.4 3.4 0 0 1 0-6.8z" fill="none" stroke="#5b9bf2" stroke-width="1.9" stroke-linecap="round" stroke-linejoin="round"/></svg>
<div class="t " style="left:1299.8px;top:2207.3px;font-size:26.2333632726382px;line-height:33px;color:#111827;font-weight:400;-webkit-text-stroke:0.8px currentColor;letter-spacing:0.45px;">Letzte Öffnungen</div>
<div class="b" style="left:1211.5px;top:2268.5px;width:648.0px;height:1.5px;background:#f1f2f4;"></div>
<svg class="b" style="left:1252.5px;top:2333.2px;" width="30.0" height="30.0" viewBox="0 0 24 24"><path d="M4 9.5 L12.1 4.4 L20.2 9.5 V19.4 a1.5 1.5 0 0 1 -1.5 1.5 H5.5 a1.5 1.5 0 0 1 -1.5 -1.5 Z M4 9.5 L12.1 14.5 L20.2 9.5" fill="none" stroke="#4a8ef0" stroke-width="1.85" stroke-linecap="round" stroke-linejoin="round"/></svg>
<div class="t " style="left:1296.5px;top:2315.2px;font-size:26.309687720556756px;line-height:33px;color:#374151;font-weight:400;">Motorradzentrum Freiburg G...</div>
<div class="t " style="left:1296.5px;top:2353.4px;font-size:23.058817656528845px;line-height:29px;color:#9ca3af;font-weight:400;">info@motorradzentrum-fr.de</div>
<div class="t " style="left:1490.5px;width:300px;text-align:right;top:2336.3px;font-size:22.245700798021804px;line-height:28px;color:#9ca3af;font-weight:400;">09.04. 14:00</div>
<svg class="b" style="left:1252.5px;top:2422.0px;" width="30.0" height="30.0" viewBox="0 0 24 24"><path d="M4 9.5 L12.1 4.4 L20.2 9.5 V19.4 a1.5 1.5 0 0 1 -1.5 1.5 H5.5 a1.5 1.5 0 0 1 -1.5 -1.5 Z M4 9.5 L12.1 14.5 L20.2 9.5" fill="none" stroke="#4a8ef0" stroke-width="1.85" stroke-linecap="round" stroke-linejoin="round"/></svg>
<div class="t " style="left:1296.5px;top:2405.5px;font-size:24.90408092082316px;line-height:31px;color:#374151;font-weight:400;">BISOMO GmbH</div>
<div class="t " style="left:1296.5px;top:2442.9px;font-size:22.637720909773073px;line-height:28px;color:#9ca3af;font-weight:400;">kundenservice@bisomo.de</div>
<div class="t " style="left:1490.5px;width:300px;text-align:right;top:2425.9px;font-size:21.27458693941778px;line-height:27px;color:#9ca3af;font-weight:400;">09.04. 12:18</div>
<svg class="b" style="left:1252.5px;top:2510.8px;" width="30.0" height="30.0" viewBox="0 0 24 24"><path d="M4 9.5 L12.1 4.4 L20.2 9.5 V19.4 a1.5 1.5 0 0 1 -1.5 1.5 H5.5 a1.5 1.5 0 0 1 -1.5 -1.5 Z M4 9.5 L12.1 14.5 L20.2 9.5" fill="none" stroke="#4a8ef0" stroke-width="1.85" stroke-linecap="round" stroke-linejoin="round"/></svg>
<div class="t " style="left:1296.5px;top:2492.6px;font-size:26.751969771785568px;line-height:33px;color:#374151;font-weight:400;">DirtyHarry-Bikes</div>
<div class="t " style="left:1296.5px;top:2531.6px;font-size:22.673231656058604px;line-height:28px;color:#9ca3af;font-weight:400;">dirtyharry1@t-online.de</div>
<div class="t " style="left:1490.5px;width:300px;text-align:right;top:2514.7px;font-size:21.27458693941778px;line-height:27px;color:#9ca3af;font-weight:400;">09.04. 12:16</div>
<svg class="b" style="left:1252.5px;top:2599.6px;" width="30.0" height="30.0" viewBox="0 0 24 24"><path d="M4 9.5 L12.1 4.4 L20.2 9.5 V19.4 a1.5 1.5 0 0 1 -1.5 1.5 H5.5 a1.5 1.5 0 0 1 -1.5 -1.5 Z M4 9.5 L12.1 14.5 L20.2 9.5" fill="none" stroke="#4a8ef0" stroke-width="1.85" stroke-linecap="round" stroke-linejoin="round"/></svg>
<div class="t " style="left:1296.5px;top:2582.4px;font-size:25.50419743096996px;line-height:32px;color:#374151;font-weight:400;">Siri Bikes &amp; Parts</div>
<div class="t " style="left:1296.5px;top:2620.5px;font-size:22.543980011878187px;line-height:28px;color:#9ca3af;font-weight:400;">info@siribikes.de</div>
<div class="t " style="left:1490.5px;width:300px;text-align:right;top:2604.3px;font-size:20.578133454845783px;line-height:26px;color:#9ca3af;font-weight:400;">09.04. 12:11</div>
<svg class="b" style="left:1252.5px;top:2688.4px;" width="30.0" height="30.0" viewBox="0 0 24 24"><path d="M4 9.5 L12.1 4.4 L20.2 9.5 V19.4 a1.5 1.5 0 0 1 -1.5 1.5 H5.5 a1.5 1.5 0 0 1 -1.5 -1.5 Z M4 9.5 L12.1 14.5 L20.2 9.5" fill="none" stroke="#4a8ef0" stroke-width="1.85" stroke-linecap="round" stroke-linejoin="round"/></svg>
<div class="t " style="left:1296.5px;top:2671.2px;font-size:25.28160308820021px;line-height:32px;color:#374151;font-weight:400;">ZWEIRAD WALZ OHG - Inhab...</div>
<div class="t " style="left:1296.5px;top:2708.6px;font-size:22.956299840510365px;line-height:29px;color:#9ca3af;font-weight:400;">info@zweirad-walz.de</div>
<div class="t " style="left:1490.5px;width:300px;text-align:right;top:2691.5px;font-size:22.083848488254468px;line-height:28px;color:#9ca3af;font-weight:400;">08.04. 20:12</div>
<svg class="b" style="left:1252.5px;top:2777.2px;" width="30.0" height="30.0" viewBox="0 0 24 24"><path d="M4 9.5 L12.1 4.4 L20.2 9.5 V19.4 a1.5 1.5 0 0 1 -1.5 1.5 H5.5 a1.5 1.5 0 0 1 -1.5 -1.5 Z M4 9.5 L12.1 14.5 L20.2 9.5" fill="none" stroke="#4a8ef0" stroke-width="1.85" stroke-linecap="round" stroke-linejoin="round"/></svg>
<div class="t " style="left:1296.5px;top:2759.1px;font-size:26.457760598606832px;line-height:33px;color:#374151;font-weight:400;">Motorrad Special</div>
<div class="t " style="left:1296.5px;top:2798.0px;font-size:22.73118505300724px;line-height:28px;color:#9ca3af;font-weight:400;">info@motorradspecial.com</div>
<div class="t " style="left:1490.5px;width:300px;text-align:right;top:2780.3px;font-size:22.083848488254468px;line-height:28px;color:#9ca3af;font-weight:400;">08.04. 13:22</div>
<svg class="b" style="left:1838px;top:2277px" width="20" height="16" viewBox="0 0 20 16"><path d="M10 3 L17 13 H3 Z" fill="#d4d7de"/></svg>
<div class="b" style="left:1841.0px;top:2304.0px;width:15.0px;height:299.0px;background:#d4d7de;border-radius:8px;"></div>
<svg class="b" style="left:1838px;top:2817px" width="20" height="16" viewBox="0 0 20 16"><path d="M10 13 L17 3 H3 Z" fill="#d4d7de"/></svg>
<div class="b" style="left:512.2px;top:2884.5px;width:1350.6px;height:152.5px;background:#fff;border:2.2px solid #f3f3f4;border-radius:18px;box-sizing:border-box;"></div>
<svg class="b" style="left:0;top:2900px" width="1920" height="120" viewBox="0 2900 1920 120"><path d="M577.3 2946.5 C570.4 2950.5 565.3 2957.5 565.3 2964.6 C565.3 2971.4 571.1 2976.8 577.8 2976.8 C584.9 2976.8 590.1 2971.2 590.1 2964.6 C590.1 2960 588.2 2956 585.1 2953.3 C583.8 2955.5 581.8 2956.9 579.8 2956.9 C577.8 2956.9 577.3 2954.5 577.3 2952 Z" fill="none" stroke="#f59e0b" stroke-width="3.4" stroke-linejoin="round"/><path d="M572.2 2975 C572.2 2969.5 577.6 2964.3 577.6 2964.3 C577.6 2964.3 583 2969.5 583 2975" fill="none" stroke="#f59e0b" stroke-width="3.3" stroke-linejoin="round"/><circle cx="577.6" cy="2972" r="3.4" fill="none" stroke="#f59e0b" stroke-width="3.2"/></svg>
<div class="t " style="left:621.3px;top:2930.8px;font-size:25.89118538284112px;line-height:32px;color:#111827;font-weight:400;-webkit-text-stroke:0.8px currentColor;letter-spacing:0.45px;">Warmup-Phase</div>
<div class="t " style="left:621.3px;top:2964.2px;font-size:22.6px;line-height:28px;color:#9ca3af;font-weight:400;">Langsam steigern um Domain-Reputation aufzubauen</div>
<div class="b" style="left:1442.0px;top:2939.5px;width:194.0px;height:42.3px;background:#f3f4f6;border-radius:22px;"></div>
<div class="t " style="left:1389.0px;width:300px;text-align:center;top:2946.4px;font-size:23.4px;line-height:29px;color:#4b5563;font-weight:400;-webkit-text-stroke:0.45px currentColor;">Nicht gestartet</div>
<div class="t " style="left:1658.0px;top:2946.7px;font-size:22.5px;line-height:28px;color:#6b7280;font-weight:400;">Einstellungen<svg width="17" height="14" viewBox="0 0 17 14" style="vertical-align:-1px;margin-left:7px"><path d="M1.5 7H15 M9.5 1.8L15 7 9.5 12.2" fill="none" stroke="#6b7280" stroke-width="1.8" stroke-linecap="round" stroke-linejoin="round"/></svg></div>
<div class="b" style="left:455px;top:0;width:1450px;height:195px;background:#fff;border-bottom:1.5px solid #e9eaec;box-shadow:0 1px 3px rgba(0,0,0,0.05);"></div>
<div class="t " style="left:512.6px;top:32.2px;font-size:35.4px;line-height:44px;color:#111827;font-weight:700;">Admybike</div>
<div class="t " style="left:512.6px;top:81.7px;font-size:35.4px;line-height:44px;color:#111827;font-weight:700;">Dashboard</div>
<div class="t " style="left:512.6px;top:133.0px;font-size:26.4px;line-height:33px;color:#6b7280;font-weight:400;">Admybike – Letzte 30 Tage</div>
<div class="b" style="left:844.3px;top:65.5px;width:240.4px;height:64.5px;border:1.5px solid #e5e7eb;border-radius:13px;box-sizing:border-box;background:#fff;"></div>
<div class="t " style="left:874.7px;top:82.4px;font-size:26.2px;line-height:33px;color:#1f2937;font-weight:400;">Admybike</div>
<svg class="b" style="left:1059.0px;top:87.5px;" width="22.0" height="22.0" viewBox="0 0 24 24"><path d="M6 9l6 6 6-6" fill="none" stroke="#111827" stroke-width="2.2" stroke-linecap="round" stroke-linejoin="round"/></svg>
<div class="b" style="left:1100.6px;top:65.5px;width:218.9px;height:64.5px;border:1.5px solid #e5e7eb;border-radius:13px;box-sizing:border-box;background:#fff;"></div>
<div class="t " style="left:1131.0px;top:82.4px;font-size:26.2px;line-height:33px;color:#1f2937;font-weight:400;">30 Tage</div>
<svg class="b" style="left:1293.5px;top:87.5px;" width="22.0" height="22.0" viewBox="0 0 24 24"><path d="M6 9l6 6 6-6" fill="none" stroke="#111827" stroke-width="2.2" stroke-linecap="round" stroke-linejoin="round"/></svg>
<div class="b" style="left:1342.0px;top:46.5px;width:162.6px;height:101.9px;border:1.5px solid #e5e7eb;border-radius:13px;box-sizing:border-box;background:#fff;"></div>
<svg class="b" style="left:0;top:0" width="1920" height="200" viewBox="0 0 1920 200"><rect x="1372.9" y="86.7" width="17.5" height="17.9" rx="2.6" fill="none" stroke="#374151" stroke-width="2.1"/><path d="M1367.9 92.2 V105.8 Q1367.9 107.7 1369.8 107.7 H1385.3" fill="none" stroke="#374151" stroke-width="2.1" stroke-linecap="round"/><text x="1381.6" y="98.9" font-family="Liberation Sans" font-size="6.3" font-weight="700" fill="#374151" text-anchor="middle">PDF</text></svg>
<div class="t " style="left:1404.6px;top:64.2px;font-size:25.5px;line-height:32px;color:#374151;font-weight:400;">PDF</div>
<div class="t " style="left:1404.6px;top:99.6px;font-size:25.5px;line-height:32px;color:#374151;font-weight:400;">Report</div>
<div class="b" style="left:1526.4px;top:64.4px;width:143.0px;height:66.6px;border:1.5px solid #e5e7eb;border-radius:13px;box-sizing:border-box;background:#fff;"></div>
<svg class="b" style="left:0;top:0" width="1920" height="200" viewBox="0 0 1920 200"><path d="M1560.5 89.8 A8.3 8.3 0 0 0 1560.4 105.6" fill="none" stroke="#374151" stroke-width="2.2"/><path d="M1554.8 105.9 H1560.9 V100" fill="none" stroke="#374151" stroke-width="2.2"/><path d="M1566.8 105.6 A8.3 8.3 0 0 0 1566.9 89.8" fill="none" stroke="#374151" stroke-width="2.2"/><path d="M1567 95 V89 H1573" fill="none" stroke="#374151" stroke-width="2.2"/></svg>
<div class="t " style="left:1589.0px;top:81.5px;font-size:25.9px;line-height:32px;color:#374151;font-weight:400;">Sync</div>
<div class="b" style="left:1691.2px;top:66.2px;width:171.7px;height:63.3px;background:#6b7280;border-radius:14px;"></div>
<svg class="b" style="left:1714.0px;top:84.6px;" width="26.4" height="26.4" viewBox="0 0 24 24"><path d="M2 3L23.3 11.9 2 20.8Z M4.75 6.9L15.7 11.8 4.75 10.2Z M4.75 13.6L15.7 12.1 4.75 17Z" fill="#ffffff" fill-rule="evenodd"/></svg>
<div class="t " style="left:1752.7px;top:81.9px;font-size:25.6px;line-height:32px;color:#ffffff;font-weight:400;-webkit-text-stroke:0.45px currentColor;">Senden</div>
<div class="b" style="left:0.0px;top:0.0px;width:455.0px;height:3093.6px;background:#111827;"></div>
<div class="b" style="left:36.0px;top:18.0px;width:56.5px;height:57.0px;background:#6b7280;border-radius:14px;"></div>
<svg class="b" style="left:47.9px;top:29.9px;" width="32.3" height="32.3" viewBox="0 0 24 24"><path d="M2 3L23.3 11.9 2 20.8Z M4.75 6.9L15.7 11.8 4.75 10.2Z M4.75 13.6L15.7 12.1 4.75 17Z" fill="#ffffff" fill-rule="evenodd"/></svg>
<div class="t " style="left:113.5px;top:31.1px;font-size:35px;line-height:44px;color:#ffffff;font-weight:400;font-family:'Liberation Serif',serif;">To</div>
<div class="t " style="left:151.0px;top:9.6px;font-size:58px;line-height:72px;color:#ffffff;font-weight:400;font-family:'Liberation Serif',serif;">S</div>
<div class="t " style="left:186.0px;top:31.1px;font-size:35px;line-height:44px;color:#ffffff;font-weight:400;font-family:'Liberation Serif',serif;">ender</div>
<div class="b" style="left:0.0px;top:110.5px;width:455.0px;height:1.5px;background:#1f2937;"></div>
<div class="b" style="left:21.0px;top:140.2px;width:413.0px;height:71.0px;background:#343a48;border-radius:18px;"></div>
<svg class="b" style="left:42.4px;top:157.4px" width="36.5" height="36.5" viewBox="0 0 24 24"><path d="M19 5v2h-4V5h4M9 5v6H5V5h4m10 8v6h-4v-6h4M9 17v2H5v-2h4M21 3h-8v6h8V3zM11 3H3v10h8V3zm10 8h-8v10h8V11zm-10 4H3v6h8v-6z" fill="#ffffff" fill-rule="evenodd" stroke="#ffffff" stroke-width="0.3"/></svg>
<div class="t " style="left:100.3px;top:159.5px;font-size:26.06196103481316px;line-height:33px;color:#ffffff;font-weight:400;-webkit-text-stroke:0.45px currentColor;">Dashboard</div>
<svg class="b" style="left:42.4px;top:235.8px" width="36.5" height="36.5" viewBox="0 0 24 24"><path d="M17 11V3H7v4H3v14h8v-4h2v4h8V11h-4zM7 19H5v-2h2v2zm0-4H5v-2h2v2zm0-4H5V9h2v2zm4 4H9v-2h2v2zm0-4H9V9h2v2zm0-4H9V5h2v2zm4 8h-2v-2h2v2zm0-4h-2V9h2v2zm0-4h-2V5h2v2zm4 12h-2v-2h2v2zm0-4h-2v-2h2v2z" fill="#d1d5db" fill-rule="evenodd" stroke="#d1d5db" stroke-width="0.3"/></svg>
<div class="t " style="left:100.3px;top:237.7px;font-size:26.168065079432683px;line-height:33px;color:#d1d5db;font-weight:400;-webkit-text-stroke:0.45px currentColor;">Projekte</div>
<svg class="b" style="left:42.4px;top:314.0px" width="36.5" height="36.5" viewBox="0 0 24 24"><path d="M12 7V3H2v18h20V7H12zM6 19H4v-2h2v2zm0-4H4v-2h2v2zm0-4H4V9h2v2zm0-4H4V5h2v2zm4 12H8v-2h2v2zm0-4H8v-2h2v2zm0-4H8V9h2v2zm0-4H8V5h2v2zm10 12h-8v-2h2v-2h-2v-2h2v-2h-2V9h8v10zm-2-8h-2v2h2v-2zm0 4h-2v2h2v-2z" fill="#d1d5db" fill-rule="evenodd" stroke="#d1d5db" stroke-width="0.3"/></svg>
<div class="t " style="left:100.3px;top:316.6px;font-size:25.96896499774017px;line-height:32px;color:#d1d5db;font-weight:400;-webkit-text-stroke:0.45px currentColor;">Firmen</div>
<svg class="b" style="left:42.4px;top:392.3px" width="36.5" height="36.5" viewBox="0 0 24 24"><path d="M10 12c2.21 0 4-1.79 4-4s-1.79-4-4-4-4 1.79-4 4 1.79 4 4 4zm0-6c1.1 0 2 .9 2 2s-.9 2-2 2-2-.9-2-2 .9-2 2-2zM4 18c.22-.72 3.31-2 6-2 0-.7.13-1.37.35-1.99C7.62 13.91 2 15.27 2 18v2h9.54c-.52-.58-.93-1.25-1.19-2H4zm15.43.02c.36-.59.57-1.28.57-2.02 0-2.21-1.79-4-4-4s-4 1.79-4 4 1.79 4 4 4c.74 0 1.43-.22 2.02-.57L20.59 22 22 20.59l-2.57-2.57zM16 18c-1.1 0-2-.9-2-2s.9-2 2-2 2 .9 2 2-.9 2-2 2z" fill="#d1d5db" fill-rule="evenodd" stroke="#d1d5db" stroke-width="0.3"/></svg>
<div class="t " style="left:100.3px;top:394.2px;font-size:26.61146464259245px;line-height:33px;color:#d1d5db;font-weight:400;-webkit-text-stroke:0.45px currentColor;">Firmen finden</div>
<svg class="b" style="left:42.4px;top:470.6px" width="36.5" height="36.5" viewBox="0 0 24 24"><path d="M20.5 3l-.16.03L15 5.1 9 3 3.36 4.9c-.21.07-.36.25-.36.48V20.5c0 .28.22.5.5.5l.16-.03L9 18.9l6 2.1 5.64-1.9c.21-.07.36-.25.36-.48V3.5c0-.28-.22-.5-.5-.5zM10 5.47l4 1.4v11.66l-4-1.4V5.47zm-5 .99l3-1.01v11.7l-3 1.16V6.46zm14 11.08l-3 1.01V6.86l3-1.16v11.84z" fill="#d1d5db" fill-rule="evenodd" stroke="#d1d5db" stroke-width="0.3"/></svg>
<div class="t " style="left:100.3px;top:472.6px;font-size:26.232594626397333px;line-height:33px;color:#d1d5db;font-weight:400;-webkit-text-stroke:0.45px currentColor;">Karte</div>
<svg class="b" style="left:42.4px;top:549.0px" width="36.5" height="36.5" viewBox="0 0 24 24"><path d="M21.99 8c0-.72-.37-1.35-.94-1.7L12 1 2.95 6.3C2.38 6.65 2 7.28 2 8v10c0 1.1.9 2 2 2h16c1.1 0 2-.9 2-2l-.01-10zm-2 0v.01L12 13 4 8l8-4.68L19.99 8zM4 18v-7.66l8 5.02 7.99-4.99L20 18H4z" fill="#d1d5db" fill-rule="evenodd" stroke="#d1d5db" stroke-width="0.3"/></svg>
<div class="t " style="left:100.3px;top:550.8px;font-size:26.63649765161644px;line-height:33px;color:#d1d5db;font-weight:400;-webkit-text-stroke:0.45px currentColor;">Templates</div>
<svg class="b" style="left:0;top:-1.0px" width="100" height="700" viewBox="0 0 100 700"><path d="M46.8 632.7 L68.6 642 L46.8 657.1 Z M50.4 638.3 L64.5 642.6 L50.4 642.6 Z M50.4 647.3 L59.5 645.6 L50.4 651.3 Z" fill="#d1d5db" fill-rule="evenodd"/><circle cx="68.1" cy="652.4" r="10" fill="#111827"/><circle cx="68.1" cy="652.4" r="7.7" fill="#d1d5db"/><path d="M67.9 648 V652 L70.6 654.8" fill="none" stroke="#111827" stroke-width="1.5" stroke-linecap="round"/></svg>
<div class="t " style="left:100.3px;top:629.2px;font-size:26.218565303047864px;line-height:33px;color:#d1d5db;font-weight:400;-webkit-text-stroke:0.45px currentColor;">Kampagnen</div>
<svg class="b" style="left:42.4px;top:705.5px" width="36.5" height="36.5" viewBox="0 0 24 24"><path d="M19 5v14H5V5h14m0-2H5c-1.1 0-2 .9-2 2v14c0 1.1.9 2 2 2h14c1.1 0 2-.9 2-2V5c0-1.1-.9-2-2-2zm-4.86 8.86l-3 3.87L9 13.14 6 17h12l-3.86-5.14z" fill="#d1d5db" fill-rule="evenodd" stroke="#d1d5db" stroke-width="0.3"/></svg>
<div class="t " style="left:100.3px;top:707.5px;font-size:26.373207565146966px;line-height:33px;color:#d1d5db;font-weight:400;-webkit-text-stroke:0.45px currentColor;">Medien</div>
<svg class="b" style="left:42.4px;top:783.8px" width="36.5" height="36.5" viewBox="0 0 24 24"><path d="M18 16.08c-.76 0-1.44.3-1.96.77L8.91 12.7c.05-.23.09-.46.09-.7s-.04-.47-.09-.7l7.05-4.11c.54.5 1.25.81 2.04.81 1.66 0 3-1.34 3-3s-1.34-3-3-3-3 1.34-3 3c0 .24.04.47.09.7L8.04 9.81C7.5 9.31 6.79 9 6 9c-1.66 0-3 1.34-3 3s1.34 3 3 3c.79 0 1.5-.31 2.04-.81l7.12 4.16c-.05.21-.08.43-.08.65 0 1.61 1.31 2.92 2.92 2.92s2.92-1.31 2.92-2.92c0-1.61-1.31-2.92-2.92-2.92zM18 4c.55 0 1 .45 1 1s-.45 1-1 1-1-.45-1-1 .45-1 1-1zM6 13c-.55 0-1-.45-1-1s.45-1 1-1 1 .45 1 1-.45 1-1 1zm12 7.02c-.55 0-1-.45-1-1s.45-1 1-1 1 .45 1 1-.45 1-1 1z" fill="#d1d5db" fill-rule="evenodd" stroke="#d1d5db" stroke-width="0.3"/></svg>
<div class="t " style="left:100.3px;top:785.8px;font-size:26.200158292623016px;line-height:33px;color:#d1d5db;font-weight:400;-webkit-text-stroke:0.45px currentColor;">Social Media</div>
<svg class="b" style="left:0;top:0.8px" width="100" height="950" viewBox="0 0 100 950"><path d="M48.9 881.8 A11.7 11.7 0 1 0 51.9 871.3" fill="none" stroke="#d1d5db" stroke-width="2.9"/><path d="M48.4 867.4 V876.1 H56.8" fill="none" stroke="#d1d5db" stroke-width="2.7"/><path d="M60.6 872.3 V879.9 L65.6 884.9" fill="none" stroke="#d1d5db" stroke-width="2.7"/></svg>
<div class="t " style="left:100.3px;top:863.4px;font-size:26.949327817993797px;line-height:34px;color:#d1d5db;font-weight:400;-webkit-text-stroke:0.45px currentColor;">E-Mail-Log</div>
<svg class="b" style="left:42.4px;top:940.5px" width="36.5" height="36.5" viewBox="0 0 24 24"><path d="M3 20V16h2v4zm4 0v-7h2v7zm4 0v-5h2v5zm4 0v-7h2v7zm4 0V9h2v11z M3 13.5l5-5.5 4 3.5 9-8.5 1.4 1.4-10.3 9.8-4-3.5-3.7 4z" fill="#d1d5db" fill-rule="evenodd" stroke="#d1d5db" stroke-width="0.3"/></svg>
<div class="t " style="left:100.3px;top:941.6px;font-size:27.164388910581806px;line-height:34px;color:#d1d5db;font-weight:400;-webkit-text-stroke:0.45px currentColor;">Analytics</div>
<div class="t " style="left:28.6px;top:1030.2px;font-size:21px;line-height:26px;color:#6b7280;font-weight:700;letter-spacing:1.6px;">SYSTEM</div>
<svg class="b" style="left:0;top:0" width="100" height="1200" viewBox="0 0 100 1200"><path d="M56.45 1097.88 L58.04 1094.05 L63.16 1094.05 L64.75 1097.88 L66.60 1098.95 L70.71 1098.41 L73.27 1102.84 L70.74 1106.13 L70.74 1108.27 L73.27 1111.56 L70.71 1115.99 L66.60 1115.45 L64.75 1116.52 L63.16 1120.35 L58.04 1120.35 L56.45 1116.52 L54.60 1115.45 L50.49 1115.99 L47.93 1111.56 L50.46 1108.27 L50.46 1106.13 L47.93 1102.84 L50.49 1098.41 L54.60 1098.95 Z" fill="none" stroke="#d1d5db" stroke-width="2.9" stroke-linejoin="round"/><circle cx="60.6" cy="1107.2" r="5.3" fill="#d1d5db"/></svg>
<div class="t " style="left:100.3px;top:1090.4px;font-size:26.3px;line-height:33px;color:#d1d5db;font-weight:400;-webkit-text-stroke:0.45px currentColor;">Einstellungen</div>
<div class="b" style="left:0.0px;top:2957.5px;width:455.0px;height:1.5px;background:#1f2937;"></div>
<div class="b" style="left:28.0px;top:2994.0px;width:64.0px;height:64.0px;background:#303744;border-radius:50%;"></div>
<svg class="b" style="left:45.0px;top:3011.0px;" width="30.0" height="30.0" viewBox="0 0 24 24"><path d="M12 12a3.5 3.5 0 1 0 0-7 3.5 3.5 0 0 0 0 7z M5 19v-1.5c0-2 3.5-3.5 7-3.5s7 1.5 7 3.5V19z" fill="none" stroke="#d1d5db" stroke-width="2" stroke-linecap="round" stroke-linejoin="round"/></svg>
<div class="t " style="left:114.0px;top:2990.8px;font-size:25px;line-height:31px;color:#ffffff;font-weight:700;">Peter Neumann</div>
<div class="t " style="left:114.0px;top:3033.7px;font-size:22.4px;line-height:28px;color:#6b7280;font-weight:400;">Abmelden</div>
<div class="b" style="left:444.5px;top:1513.0px;width:50.0px;height:50.0px;background:#1f2937;border:3px solid #363c4a;border-radius:50%;box-sizing:border-box;"></div>
<svg class="b" style="left:400px;top:1500px" width="100" height="80" viewBox="400 1500 100 80"><path d="M472.8 1531 L465.2 1538.3 L472.8 1545.6" fill="none" stroke="#9ca3af" stroke-width="2.1" stroke-linecap="round" stroke-linejoin="round"/></svg>
<div class="b" style="left:1905.0px;top:0.0px;width:15.0px;height:3112.0px;background:#fff;"></div>
<svg class="b" style="left:1904px;top:2px" width="16" height="14" viewBox="0 0 16 14"><path d="M8 3 L13 11 H3 Z" fill="#d4d7de"/></svg>
<div class="b" style="left:1906.0px;top:196.0px;width:10.0px;height:2876.0px;background:#d4d7de;border-radius:6px;"></div>
<svg class="b" style="left:1904px;top:3076px" width="16" height="14" viewBox="0 0 16 14"><path d="M8 11 L13 3 H3 Z" fill="#d4d7de"/></svg>
<div class="b" style="left:0.0px;top:3093.0px;width:1920.0px;height:19.0px;background:#fff;"></div>
<div class="b" style="left:21.0px;top:3097.7px;width:1843.0px;height:10.8px;background:#d4d7de;border-radius:4px;"></div>
<svg class="b" style="left:2px;top:3095px" width="16" height="16" viewBox="0 0 16 16"><path d="M4 8 L12 3 V13 Z" fill="#d4d7de"/></svg>
<svg class="b" style="left:1884px;top:3095px" width="16" height="16" viewBox="0 0 16 16"><path d="M12 8 L4 3 V13 Z" fill="#d4d7de"/></svg>
</body></html>
